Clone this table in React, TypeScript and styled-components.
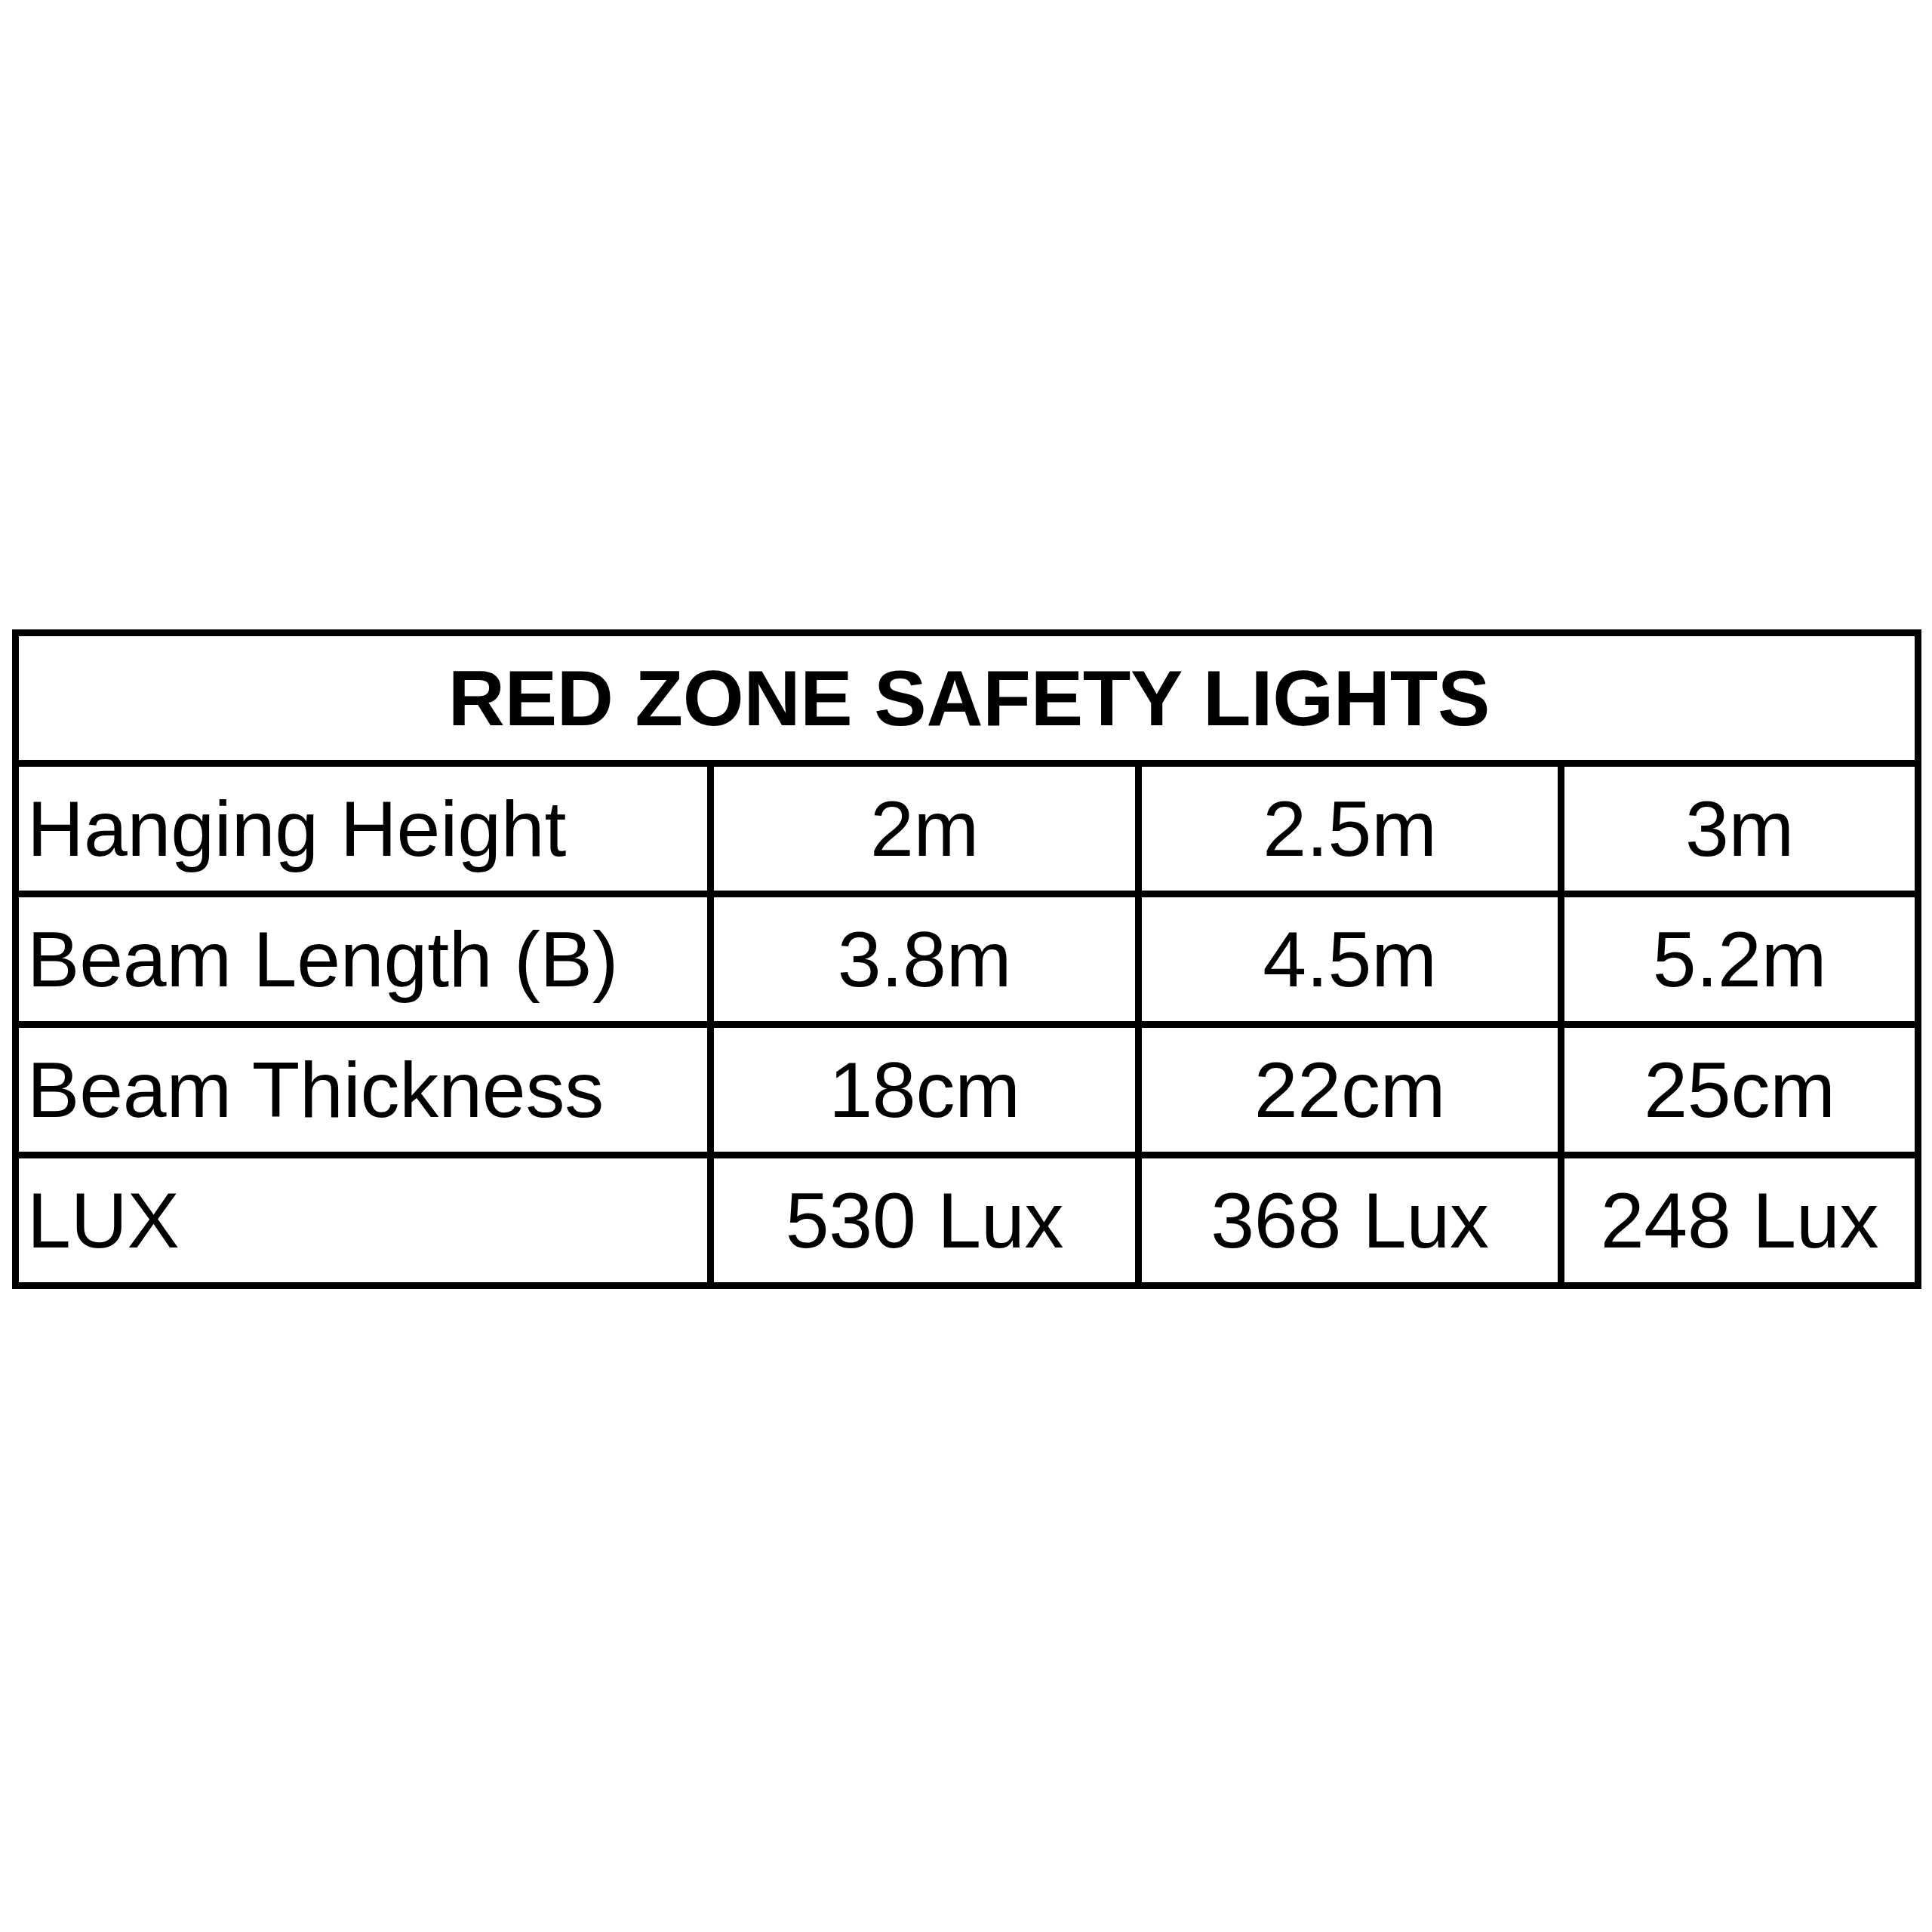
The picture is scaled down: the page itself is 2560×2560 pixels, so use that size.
import { Fragment } from 'react';
import styled, { createGlobalStyle } from 'styled-components';

const GlobalStyle = createGlobalStyle`
  html, body {
    margin: 0;
    padding: 0;
    background: #ffffff;
  }
`;

const Page = styled.div`
  width: 2560px;
  height: 2560px;
  box-sizing: border-box;
  padding: 834px 0 0 16px;
  background: #ffffff;
  font-family: 'Liberation Sans', Arial, sans-serif;
  color: #000000;
`;

const Table = styled.div`
  display: grid;
  grid-template-columns: 912px 558px 551px 464px;
  grid-auto-rows: 164px;
  gap: 9px;
  padding: 9px;
  width: 2530px;
  box-sizing: border-box;
  background: #000000;
`;

const TitleCell = styled.div`
  grid-column: 1 / -1;
  display: flex;
  align-items: center;
  justify-content: center;
  background: #ffffff;
  font-size: 104px;
  font-weight: 700;
  letter-spacing: -0.2px;
  padding-left: 6px;
`;

const Cell = styled.div<{ $label?: boolean }>`
  display: flex;
  align-items: center;
  justify-content: ${(p) => (p.$label ? 'flex-start' : 'center')};
  padding-left: ${(p) => (p.$label ? '11px' : '0')};
  background: #ffffff;
  font-size: 104px;
  font-weight: 400;
  letter-spacing: -0.2px;
  white-space: nowrap;
`;

const rows = [
  { label: 'Hanging Height', values: ['2m', '2.5m', '3m'] },
  { label: 'Beam Length (B)', values: ['3.8m', '4.5m', '5.2m'] },
  { label: 'Beam Thickness', values: ['18cm', '22cm', '25cm'] },
  { label: 'LUX', values: ['530 Lux', '368 Lux', '248 Lux'] },
];

export default function App() {
  return (
    <>
      <GlobalStyle />
      <Page>
        <Table>
          <TitleCell>RED ZONE SAFETY LIGHTS</TitleCell>
          {rows.map((row) => (
            <Fragment key={row.label}>
              <Cell $label>{row.label}</Cell>
              {row.values.map((v) => (
                <Cell key={v}>{v}</Cell>
              ))}
            </Fragment>
          ))}
        </Table>
      </Page>
    </>
  );
}
